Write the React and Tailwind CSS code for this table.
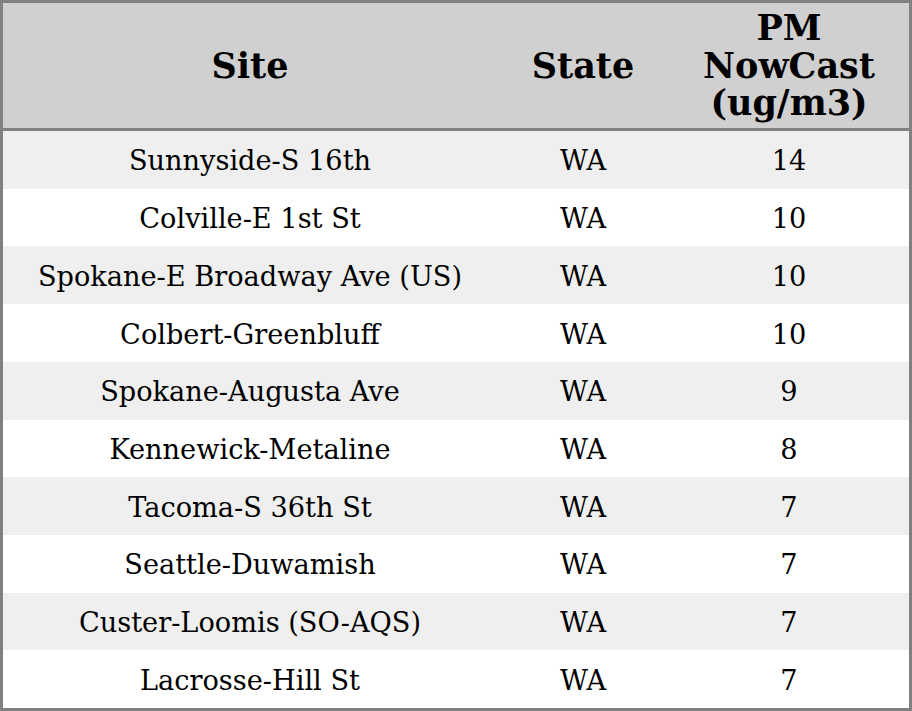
import React from "react";

const rows = [
  ["Sunnyside-S 16th", "WA", "14"],
  ["Colville-E 1st St", "WA", "10"],
  ["Spokane-E Broadway Ave (US)", "WA", "10"],
  ["Colbert-Greenbluff", "WA", "10"],
  ["Spokane-Augusta Ave", "WA", "9"],
  ["Kennewick-Metaline", "WA", "8"],
  ["Tacoma-S 36th St", "WA", "7"],
  ["Seattle-Duwamish", "WA", "7"],
  ["Custer-Loomis (SO-AQS)", "WA", "7"],
  ["Lacrosse-Hill St", "WA", "7"],
];

export default function App() {
  return (
    <div
      className="w-[912px] h-[711px] border-[3px] border-[#808080] bg-white text-black flex flex-col"
      style={{ fontFamily: '"DejaVu Serif", serif' }}
    >
      {/* header */}
      <div className="h-[125px] bg-[#d0d0d0] grid grid-cols-[494px_172px_240px] items-center text-center font-bold text-[35px] leading-[37.5px] border-b-[3px] border-[#808080] box-content">
        <div>Site</div>
        <div>State</div>
        <div>
          PM
          <br />
          NowCast
          <br />
          (ug/m3)
        </div>
      </div>

      {/* rows */}
      <div className="flex-1 flex flex-col">
        {rows.map((r, i) => (
          <div
            key={i}
            className={`flex-1 grid grid-cols-[494px_172px_240px] items-center text-center text-[27.2px] pt-[4px] ${
              i % 2 === 0 ? "bg-[#efefef]" : "bg-white"
            }`}
          >
            <div>{r[0]}</div>
            <div>{r[1]}</div>
            <div>{r[2]}</div>
          </div>
        ))}
      </div>
    </div>
  );
}
